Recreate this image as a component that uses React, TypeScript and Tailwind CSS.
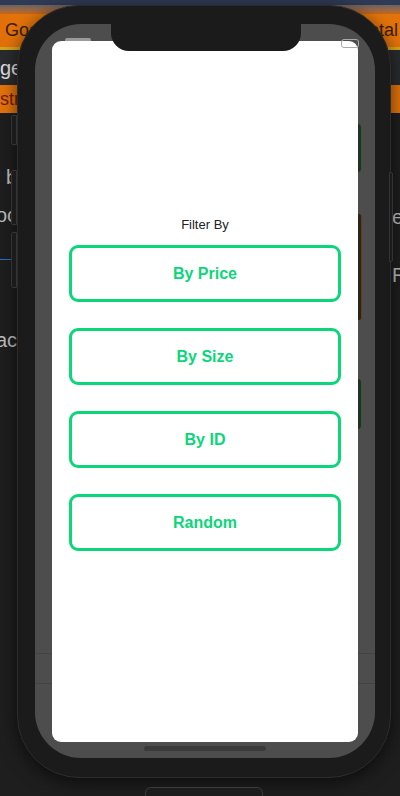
import React from 'react'

const options = ['By Price', 'By Size', 'By ID', 'Random']

function FilterButton({ label }: { label: string }) {
  return (
    <button className="flex h-[57px] w-full items-center justify-center rounded-[9px] border-[3px] border-[#0bd67a] bg-white text-[16px] font-bold text-[#0bd67a]">
      {label}
    </button>
  )
}

function Phone() {
  return (
    <div className="absolute left-[17px] top-[5px] h-[773px] w-[374px] rounded-[62px] border border-[#2c2c2c] bg-[#1b1b1b] p-[17px] pt-[18px] shadow-[0_4px_18px_rgba(0,0,0,0.6)]">
      {/* side buttons */}
      <div className="absolute -left-[7px] top-[109px] h-[30px] w-[6px] rounded-l-[2px] border border-[#333] bg-[#1b1b1b]" />
      <div className="absolute -left-[7px] top-[164px] h-[55px] w-[6px] rounded-l-[2px] border border-[#333] bg-[#1b1b1b]" />
      <div className="absolute -left-[7px] top-[226px] h-[56px] w-[6px] rounded-l-[2px] border border-[#333] bg-[#1b1b1b]" />
      <div className="absolute -right-[3px] top-[166px] h-[90px] w-[4px] rounded-r-[2px] border border-[#333] bg-[#1b1b1b]" />

      {/* bezel */}
      <div className="relative h-[734px] w-[340px] rounded-[46px] bg-[#4d4d4d] p-[17px]">
        {/* faint lines showing through */}
        <div className="absolute left-0 top-[629px] h-px w-full bg-[#444]" />
        <div className="absolute left-0 top-[659px] h-px w-full bg-[#444]" />
        {/* things peeking on right edge */}
        <div className="absolute left-[323px] top-[100px] h-[48px] w-[4px] rounded-r-[4px] border-r border-[#1f6a2a] bg-[#2b2b2b]" />
        <div className="absolute left-[323px] top-[190px] h-[106px] w-[4px] rounded-r-[3px] border-r border-[#6a3a10] bg-[#2a2420]" />
        <div className="absolute left-[323px] top-[355px] h-[50px] w-[4px] rounded-r-[4px] border-r border-[#1f6a2a] bg-[#2b2b2b]" />

        {/* screen */}
        <div className="relative h-[701px] w-[306px] rounded-[9px] bg-white px-[17px] pt-[176px]">
          <p className="text-center text-[13px] leading-[16px] text-[#222]">Filter By</p>
          <div className="mt-[12px] flex flex-col gap-[26px]">
            {options.map((o) => (
              <FilterButton key={o} label={o} />
            ))}
          </div>
        </div>

        {/* status bar specks */}
        <div className="absolute left-[30px] top-[14px] h-[3px] w-[26px] rounded-t-[2px] bg-[#9a9a9a]" />
        <div className="absolute left-[306px] top-[15px] h-[9px] w-[18px] rounded-[3px] border border-[#aaa]" />

        {/* notch */}
        <div className="absolute left-[76px] top-0 h-[27px] w-[190px] rounded-b-[18px] bg-[#1b1b1b]" />

        {/* home indicator */}
        <div className="absolute bottom-[7px] left-[109px] h-[5px] w-[122px] rounded-full bg-[#3a3a3a]" />
      </div>
    </div>
  )
}

export default function App() {
  return (
    <div className="relative h-[796px] w-[400px] overflow-hidden bg-[#1e1e1e] font-['Liberation_Sans',sans-serif]">
      {/* page behind the device */}
      <div className="h-[5px] bg-[#2f3b55]" />
      <div className="h-[9px] bg-gradient-to-b from-[#6a6262] to-[#c4680e]" />
      <div className="flex h-[33px] items-center justify-between bg-gradient-to-r from-[#e2700a] via-[#f08c14] to-[#e2720a] text-[18px] text-[#3a1c00]">
        <span className="pl-[5px]">Google</span>
        <span className="pr-[2px]">Total</span>
      </div>
      <div className="h-[3px] bg-[#d4a41e]" />
      <div className="flex h-[35px] items-center bg-[#2a2b2e] text-[20px] text-[#e0e0e0]">
        <span>ger</span>
      </div>
      <div className="flex h-[28px] items-center bg-gradient-to-r from-[#e4740c] via-[#f29016] to-[#e4740c] text-[18px] text-[#7a1800]">
        <span>stra</span>
      </div>

      <div className="flex justify-between text-[20px] text-[#bdbdbd]">
        <div className="flex w-[17px] flex-col items-end overflow-hidden">
          <span className="mt-[52px] leading-[24px]">b</span>
          <span className="mt-[14px] leading-[24px]">oc</span>
          <span className="mt-[10px] w-[17px] border-b border-[#2a6fd0] text-right leading-[22px] text-[#2a6fd0]">\</span>
          <span className="mt-[68px] leading-[24px]">ac</span>
        </div>
        <div className="flex w-[10px] flex-col items-start overflow-hidden pl-[2px]">
          <span className="mt-[92px] leading-[24px]">e</span>
          <span className="mt-[34px] leading-[24px]">R</span>
        </div>
      </div>

      <Phone />

      {/* control under the device */}
      <div className="absolute left-[145px] top-[787px] h-[20px] w-[118px] rounded-[6px] border border-[#3a3a3a] bg-[#1c1c1c]" />
    </div>
  )
}
